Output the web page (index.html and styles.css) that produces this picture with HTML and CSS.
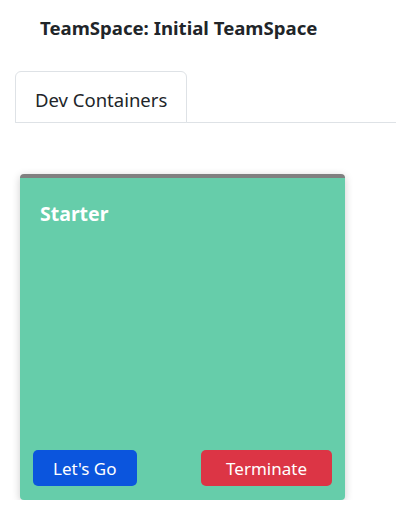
FILE: index.html
```html
<!DOCTYPE html>
<html>
  <head>
    <meta charset="UTF-8" />
    <title>TeamSpace</title>
    <link rel="stylesheet" href="styles.css">
  </head>
  <body>
    <div class="page">
      <h1 class="title">TeamSpace: Initial TeamSpace</h1>
      <div class="tabs">
        <div class="tab active">Dev Containers</div>
      </div>
      <div class="card">
        <h2 class="card-title">Starter</h2>
        <div class="card-actions">
          <button class="btn btn-go">Let's Go</button>
          <button class="btn btn-stop">Terminate</button>
        </div>
      </div>
    </div>
  </body>
</html>
```

FILE: styles.css
```css
/* Page layout */
body {
  font-family: "Noto Sans", "Open Sans", sans-serif;
  color: #212529;
  margin: 0;
  padding: 0;
  background: #fff;
}
.page {
  padding-left: 15px;
}
.title {
  font-size: 18.6px;
  font-weight: bold;
  margin: 0;
  padding: 15px 0 0 25px;
  line-height: 26px;
}

/* Tabs */
.tabs {
  display: flex;
  margin-top: 30px;
  border-bottom: 1px solid #dee2e6;
}
.tab {
  padding: 0 19px;
  height: 50px;
  line-height: 56px;
  font-size: 18.5px;
  border: 1px solid #dee2e6;
  border-radius: 6px 6px 0 0;
  margin-bottom: -1px;
  background: #fff;
}

/* Container card */
.card {
  display: flex;
  flex-direction: column;
  justify-content: space-between;
  width: 325px;
  height: 322px;
  margin: 51px 0 0 5px;
  background-color: #66cdaa;
  border-top: 4px solid #808080;
  border-radius: 4px;
  box-shadow: 0px 2px 8px rgba(0, 0, 0, 0.2);
  box-sizing: content-box;
}
.card-title {
  color: #fff;
  font-size: 19.5px;
  font-weight: bold;
  margin: 0;
  padding: 22px 20px 0;
  line-height: 28px;
}
.card-actions {
  display: flex;
  justify-content: space-between;
  padding: 0 13px 14px;
}
.btn {
  font-family: inherit;
  font-size: 17px;
  color: #fff;
  height: 36px;
  border: none;
  border-radius: 5px;
  padding: 0 20px;
}
.btn-go {
  background-color: #0b55dd;
}
.btn-stop {
  background-color: #dc3545;
  padding: 0 25px;
}
```
